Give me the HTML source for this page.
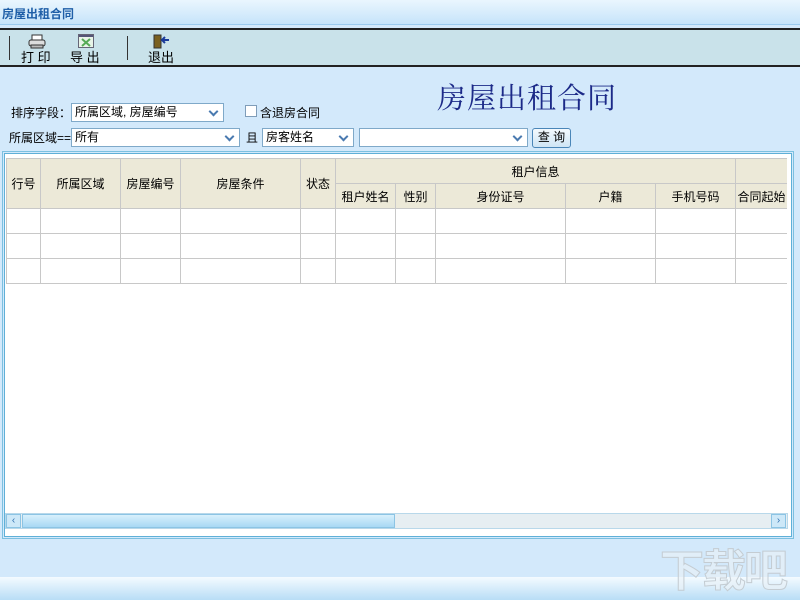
<!DOCTYPE html>
<html><head><meta charset="utf-8"><style>
*{margin:0;padding:0;box-sizing:border-box}
body{width:800px;height:600px;overflow:hidden;background:#d3e9fb;font-family:"Liberation Sans","Noto Sans CJK SC",sans-serif;font-size:12px;color:#000;position:relative}
.a{position:absolute}
.sel{position:absolute;background:#fff;border:1px solid #7fa9c9;height:19px;padding:1px 3px;font-size:12px;line-height:15px}
.sel:after{content:"";position:absolute;right:6px;top:4px;width:5px;height:5px;border-right:2px solid #4a7ab0;border-bottom:2px solid #4a7ab0;transform:rotate(45deg)}
table{border-collapse:collapse;position:absolute;left:6px;top:158px;table-layout:fixed}
td{border:1px solid #c8c8c8;height:25px;text-align:center;font-size:12px;overflow:hidden;white-space:nowrap;background:#fff}
td.h{background:#ece9d8}
</style></head><body>
<div class="a" style="left:0;top:0;width:800px;height:25px;background:linear-gradient(#eaf6fe,#c6e4fa);border-bottom:1px solid #9ccbee"></div>
<div class="a" style="left:2px;top:5px;font-weight:bold;color:#1f5fa8;font-size:12px">房屋出租合同</div>
<div class="a" style="left:0;top:28px;width:800px;height:39px;background:#c9e2ea;border-top:2px solid #222;border-bottom:2px solid #222"></div>
<div class="a" style="left:9px;top:36px;width:1px;height:24px;background:#333"></div>
<div class="a" style="left:127px;top:36px;width:1px;height:24px;background:#333"></div>
<svg class="a" style="left:28px;top:34px" width="20" height="16"><rect x="4" y="1" width="10" height="5" fill="#fff" stroke="#333"/><rect x="1" y="6" width="16" height="6" rx="2" fill="#ddd" stroke="#333"/><rect x="3" y="11" width="12" height="3" fill="#bbb" stroke="#333"/></svg>
<svg class="a" style="left:78px;top:34px" width="18" height="15"><rect x="0.5" y="0.5" width="15" height="13" fill="#e8f4e8" stroke="#667"/><rect x="1" y="1" width="14" height="2" fill="#557"/><path d="M4 5l8 7M12 5l-8 7" stroke="#5a5" stroke-width="2"/></svg>
<svg class="a" style="left:153px;top:34px" width="18" height="16"><rect x="1" y="1" width="7" height="13" fill="#7a6020" stroke="#333"/><path d="M16 6h-6M12 3l-3 3 3 3" stroke="#1a3a9a" stroke-width="2" fill="none"/></svg>
<div class="a" style="left:21px;top:47px;font-size:13px">打 印</div>
<div class="a" style="left:70px;top:47px;font-size:13px">导 出</div>
<div class="a" style="left:148px;top:47px;font-size:13px">退出</div>
<div class="a" style="left:437px;top:76px;font-size:29px;color:#1c2a88;font-family:'Noto Serif CJK SC',serif;letter-spacing:1px">房屋出租合同</div>
<div class="a" style="left:11px;top:104px">排序字段：</div>
<div class="sel" style="left:71px;top:103px;width:153px">所属区域, 房屋编号</div>
<div class="a" style="left:245px;top:105px;width:12px;height:12px;background:#fff;border:1px solid #7f9db9"></div>
<div class="a" style="left:260px;top:104px">含退房合同</div>
<div class="a" style="left:9px;top:129px">所属区域==</div>
<div class="sel" style="left:71px;top:128px;width:169px">所有</div>
<div class="a" style="left:246px;top:129px">且</div>
<div class="sel" style="left:262px;top:128px;width:92px">房客姓名</div>
<div class="sel" style="left:359px;top:128px;width:169px"></div>
<div class="a" style="left:532px;top:128px;width:39px;height:20px;border:1px solid #4a86b8;border-radius:3px;background:linear-gradient(#f4fafe,#cfe5f5);text-align:center;line-height:17px">查 询</div>
<div class="a" style="left:2px;top:151px;width:792px;height:388px;border:1px solid #7cc0e0"></div>
<div class="a" style="left:4px;top:153px;width:788px;height:384px;border:1px solid #5fb0d8;background:#fff"></div>
<table>
<colgroup><col style="width:34px"><col style="width:80px"><col style="width:60px"><col style="width:120px"><col style="width:35px"><col style="width:60px"><col style="width:40px"><col style="width:130px"><col style="width:90px"><col style="width:80px"><col style="width:52px"></colgroup>
<tr><td class="h" rowspan="2" style="height:50px">行号</td><td class="h" rowspan="2">所属区域</td><td class="h" rowspan="2">房屋编号</td><td class="h" rowspan="2">房屋条件</td><td class="h" rowspan="2">状态</td><td class="h" colspan="5">租户信息</td><td class="h"></td></tr>
<tr><td class="h">租户姓名</td><td class="h">性别</td><td class="h">身份证号</td><td class="h">户籍</td><td class="h">手机号码</td><td class="h">合同起始</td></tr>
<tr><td></td><td></td><td></td><td></td><td></td><td></td><td></td><td></td><td></td><td></td><td></td></tr>
<tr><td></td><td></td><td></td><td></td><td></td><td></td><td></td><td></td><td></td><td></td><td></td></tr>
<tr><td></td><td></td><td></td><td></td><td></td><td></td><td></td><td></td><td></td><td></td><td></td></tr>
</table>
<div class="a" style="left:787px;top:158px;width:4px;height:355px;background:#fff"></div>
<div class="a" style="left:5px;top:513px;width:783px;height:16px;background:#e6eef2;border:1px solid #b8d8ea"></div>
<div class="a" style="left:6px;top:514px;width:15px;height:14px;background:#cde8f8;border:1px solid #8cc4e4;color:#3070b0;font-size:10px;text-align:center;line-height:12px">‹</div>
<div class="a" style="left:22px;top:514px;width:373px;height:14px;background:linear-gradient(#d8f0fc,#a8d8f4);border:1px solid #8cc4e4"></div>
<div class="a" style="left:771px;top:514px;width:15px;height:14px;background:#cde8f8;border:1px solid #8cc4e4;color:#3070b0;font-size:10px;text-align:center;line-height:12px">›</div>
<div class="a" style="left:0;top:577px;width:800px;height:23px;background:linear-gradient(#f4fbff,#b8ddf6)"></div>
<div class="a" style="left:660px;top:535px;font-size:44px;color:rgba(235,242,246,0.6);font-weight:bold;letter-spacing:-2px;-webkit-text-stroke:1px #c4ccd2">下载吧</div>
</body></html>
